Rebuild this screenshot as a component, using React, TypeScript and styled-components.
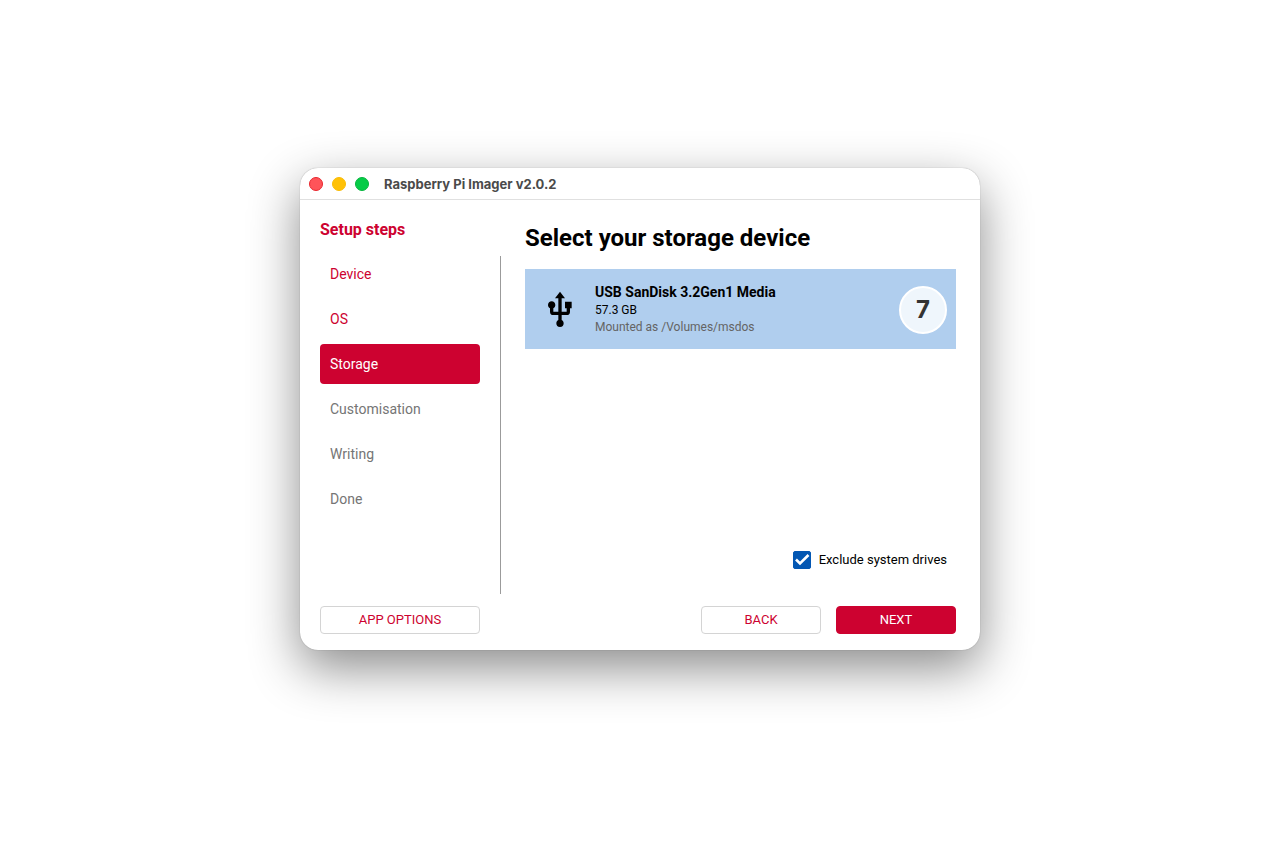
import { useState } from "react";
import styled, { createGlobalStyle } from "styled-components";

const GlobalStyle = createGlobalStyle`
  *, *::before, *::after { box-sizing: border-box; }
  body {
    margin: 0;
    background: #ffffff;
    color: #000000;
    font-family: Roboto, "Liberation Sans", sans-serif;
  }
`;

const Page = styled.main`
  min-height: 100vh;
  display: flex;
  align-items: center;
  justify-content: center;
  padding: 24px 24px 60px;
`;

const AppWindow = styled.section`
  width: 100%;
  max-width: 680px;
  background: #ffffff;
  border-radius: 18px;
  box-shadow: 0 0 1px 0 rgba(0, 0, 0, 0.4), 0 18px 50px rgba(0, 0, 0, 0.46);
`;

const TitleBar = styled.header`
  display: flex;
  align-items: center;
  gap: 15px;
  height: 32px;
  padding: 1px 9px 0;
  border-bottom: 1px solid #e0e0e0;
`;

const WindowControls = styled.div`
  display: flex;
  gap: 9px;
`;

const ControlDot = styled.button<{ $fill: string; $edge: string }>`
  width: 14px;
  height: 14px;
  padding: 0;
  border: 1px solid ${(p) => p.$edge};
  border-radius: 50%;
  background: ${(p) => p.$fill};
`;

const WindowTitle = styled.span`
  color: #4a4a4a;
  font: 700 13px/16px Inter, "Liberation Sans", sans-serif;
`;

const Body = styled.div`
  display: flex;
  gap: 24px;
  padding: 20px 24px 16px 20px;
`;

const Sidebar = styled.aside`
  flex: none;
  width: 181px;
  display: flex;
  flex-direction: column;
`;

const SidebarTitle = styled.h2`
  margin: 0 0 14px;
  color: #cd0230;
  font-size: 16px;
  font-weight: 700;
  line-height: 20px;
`;

const StepsArea = styled.nav`
  flex: 1;
  display: flex;
  justify-content: space-between;
  margin-bottom: 12px;
`;

const StepList = styled.ol`
  width: 160px;
  margin: 0;
  padding: 0;
  list-style: none;
  display: flex;
  flex-direction: column;
  gap: 5px;
`;

type StepState = "done" | "current" | "pending";

const stepColors: Record<StepState, string> = {
  done: "#cd0230",
  current: "#ffffff",
  pending: "#757575",
};

const StepLink = styled.a<{ $state: StepState }>`
  display: flex;
  align-items: center;
  height: 40px;
  padding: 0 10px;
  border-radius: 4px;
  background: ${(p) => (p.$state === "current" ? "#cd0230" : "transparent")};
  color: ${(p) => stepColors[p.$state]};
  font-size: 14px;
  line-height: 20px;
  text-decoration: none;
`;

const Divider = styled.div`
  width: 1px;
  margin-top: 2px;
  background: #9b9b9b;
`;

const Content = styled.div`
  flex: 1;
  min-width: 0;
  display: flex;
  flex-direction: column;
`;

const Heading = styled.h1`
  margin: 2px 0 15px;
  font-size: 24px;
  font-weight: 700;
  line-height: 32px;
`;

const DeviceRow = styled.button`
  display: flex;
  align-items: center;
  gap: 15px;
  width: 100%;
  min-height: 80px;
  padding: 2px 9px 0 15px;
  border: 0;
  background: #b0ceee;
  color: #000000;
  font-family: inherit;
  text-align: left;
`;

const DeviceText = styled.span`
  flex: 1;
  display: flex;
  flex-direction: column;
  padding-bottom: 1px;
`;

const DeviceName = styled.strong`
  margin-bottom: 1px;
  font-size: 14px;
  font-weight: 700;
  line-height: 18px;
`;

const DeviceDetail = styled.span<{ $muted?: boolean }>`
  color: ${(p) => (p.$muted ? "#646464" : "#000000")};
  font-size: 12px;
  line-height: 17px;
`;

const CountBadge = styled.span`
  display: flex;
  align-items: center;
  justify-content: center;
  width: 48px;
  height: 48px;
  border: 2px solid #ffffff;
  border-radius: 50%;
  background: #eff6fc;
  color: #333333;
  font: 700 24px/28px Inter, "Liberation Sans", sans-serif;
`;

const FilterLabel = styled.label`
  display: flex;
  align-items: center;
  align-self: flex-end;
  gap: 8px;
  margin: 202px 9px 37px 0;
  font-size: 13px;
  line-height: 18px;
`;

const CheckMark = styled.span`
  display: grid;
  width: 18px;
  height: 18px;

  > * {
    grid-area: 1 / 1;
  }

  svg {
    pointer-events: none;
  }
`;

const CheckInput = styled.input`
  appearance: none;
  width: 18px;
  height: 18px;
  margin: 0;
  border: 1px solid #0357b3;
  border-radius: 2px;
  background: #ffffff;

  &:checked {
    background: #0357b3;
  }
`;

const Actions = styled.div`
  display: flex;
  justify-content: flex-end;
  gap: 15px;
`;

const ActionButton = styled.button<{ $primary?: boolean; $wide?: boolean }>`
  width: ${(p) => (p.$wide ? 160 : 120)}px;
  height: 28px;
  padding: 0;
  border: 1px solid ${(p) => (p.$primary ? "#cd0230" : "#d4d4d4")};
  border-radius: 4px;
  background: ${(p) => (p.$primary ? "#cd0230" : "#ffffff")};
  color: ${(p) => (p.$primary ? "#ffffff" : "#cd0230")};
  font-family: inherit;
  font-size: 13px;
  line-height: 18px;
`;

const steps: { label: string; state: StepState }[] = [
  { label: "Device", state: "done" },
  { label: "OS", state: "done" },
  { label: "Storage", state: "current" },
  { label: "Customisation", state: "pending" },
  { label: "Writing", state: "pending" },
  { label: "Done", state: "pending" },
];

function UsbIcon() {
  return (
    <svg width="40" height="40" viewBox="0 0 24 24" aria-hidden="true">
      <path
        fill="#000000"
        d="M15,7V11H16V13H13V5H15L12,1L9,5H11V13H8V10.93C8.7,10.56 9.2,9.85 9.2,9C9.2,7.78 8.21,6.8 7,6.8C5.78,6.8 4.8,7.78 4.8,9C4.8,9.85 5.3,10.56 6,10.93V13A2,2 0 0,0 8,15H11V18.05C10.29,18.41 9.8,19.15 9.8,20A2.2,2.2 0 0,0 12,22.2A2.2,2.2 0 0,0 14.2,20C14.2,19.15 13.71,18.41 13,18.05V15H16A2,2 0 0,0 18,13V11H19V7H15Z"
      />
    </svg>
  );
}

export default function App() {
  const [excludeSystem, setExcludeSystem] = useState(true);

  return (
    <>
      <GlobalStyle />
      <Page>
        <AppWindow>
          <TitleBar>
            <WindowControls>
              <ControlDot aria-label="Close" $fill="#ff5459" $edge="#e8262d" />
              <ControlDot aria-label="Minimise" $fill="#ffc107" $edge="#fabc05" />
              <ControlDot aria-label="Zoom" $fill="#05cc47" $edge="#05b53d" />
            </WindowControls>
            <WindowTitle>Raspberry Pi Imager v2.0.2</WindowTitle>
          </TitleBar>
          <Body>
            <Sidebar>
              <SidebarTitle>Setup steps</SidebarTitle>
              <StepsArea>
                <StepList>
                  {steps.map((step) => (
                    <li key={step.label}>
                      <StepLink
                        href={`#${step.label.toLowerCase()}`}
                        $state={step.state}
                        aria-current={step.state === "current" ? "step" : undefined}
                      >
                        {step.label}
                      </StepLink>
                    </li>
                  ))}
                </StepList>
                <Divider />
              </StepsArea>
              <ActionButton $wide>APP OPTIONS</ActionButton>
            </Sidebar>
            <Content>
              <Heading>Select your storage device</Heading>
              <DeviceRow>
                <UsbIcon />
                <DeviceText>
                  <DeviceName>USB SanDisk 3.2Gen1 Media</DeviceName>
                  <DeviceDetail>57.3 GB</DeviceDetail>
                  <DeviceDetail $muted>Mounted as /Volumes/msdos</DeviceDetail>
                </DeviceText>
                <CountBadge>7</CountBadge>
              </DeviceRow>
              <FilterLabel>
                <CheckMark>
                  <CheckInput
                    type="checkbox"
                    checked={excludeSystem}
                    onChange={(e) => setExcludeSystem(e.target.checked)}
                  />
                  {excludeSystem && (
                    <svg width="18" height="18" viewBox="0 0 18 18" aria-hidden="true">
                      <path d="M3 8.5l4 4 8.5-8.5" fill="none" stroke="#ffffff" strokeWidth="2.6" />
                    </svg>
                  )}
                </CheckMark>
                Exclude system drives
              </FilterLabel>
              <Actions>
                <ActionButton>BACK</ActionButton>
                <ActionButton $primary>NEXT</ActionButton>
              </Actions>
            </Content>
          </Body>
        </AppWindow>
      </Page>
    </>
  );
}
